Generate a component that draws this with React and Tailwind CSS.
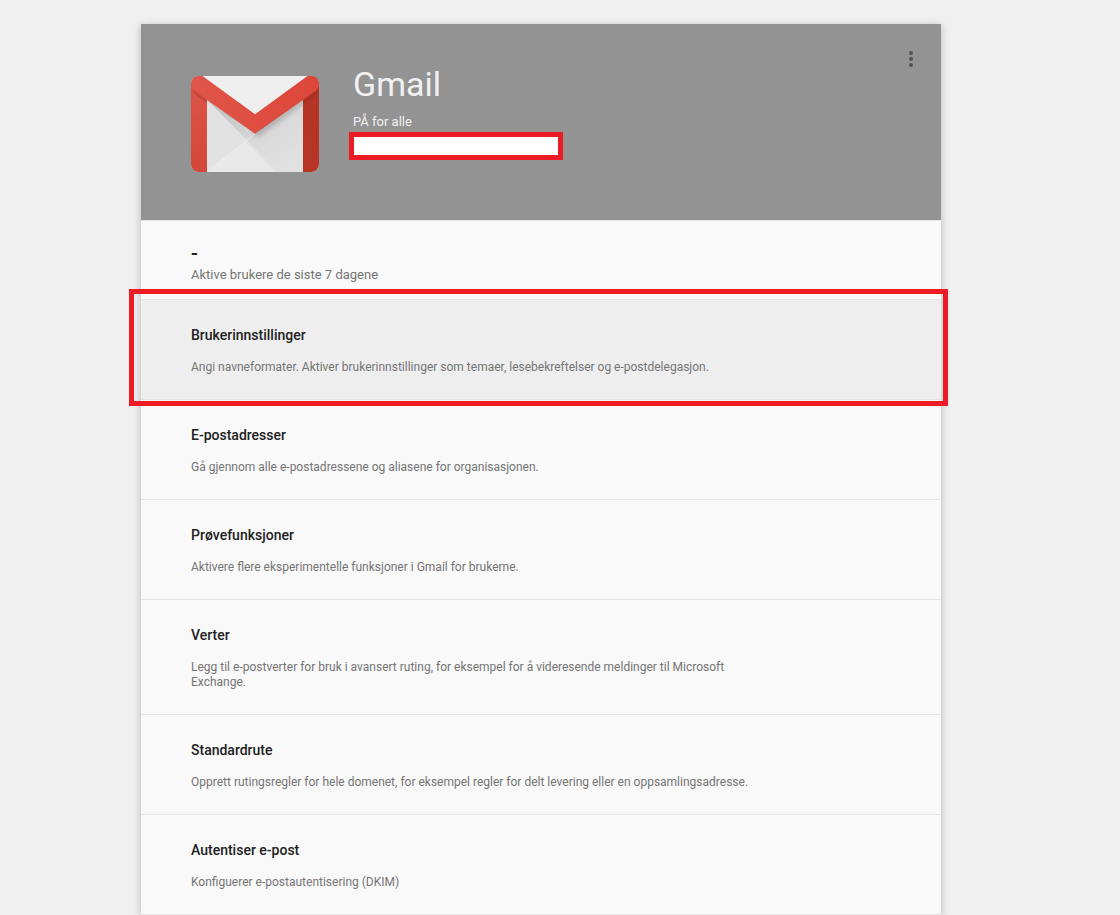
const settings = [
  {
    title: 'Brukerinnstillinger',
    text: 'Angi navneformater. Aktiver brukerinnstillinger som temaer, lesebekreftelser og e-postdelegasjon.',
    marked: true,
  },
  {
    title: 'E-postadresser',
    text: 'Gå gjennom alle e-postadressene og aliasene for organisasjonen.',
  },
  {
    title: 'Prøvefunksjoner',
    text: 'Aktivere flere eksperimentelle funksjoner i Gmail for brukerne.',
  },
  {
    title: 'Verter',
    text: 'Legg til e-postverter for bruk i avansert ruting, for eksempel for å videresende meldinger til Microsoft Exchange.',
  },
  {
    title: 'Standardrute',
    text: 'Opprett rutingsregler for hele domenet, for eksempel regler for delt levering eller en oppsamlingsadresse.',
  },
  {
    title: 'Autentiser e-post',
    text: 'Konfiguerer e-postautentisering (DKIM)',
  },
];

function GmailLogo() {
  return (
    <svg viewBox="0 0 128 96" className="h-24 w-32 shrink-0" aria-hidden="true">
      <defs>
        <clipPath id="envelope">
          <rect width="128" height="96" rx="8" />
        </clipPath>
        <clipPath id="paper">
          <rect x="16" width="96" height="96" />
        </clipPath>
        <linearGradient id="leftBar" x1="0" y1="0" x2="0" y2="1">
          <stop offset="0" stopColor="#dc5648" />
          <stop offset="1" stopColor="#d2473a" />
        </linearGradient>
        <linearGradient id="rightBar" x1="0" y1="0" x2="0" y2="1">
          <stop offset="0" stopColor="#b23324" />
          <stop offset="1" stopColor="#b83526" />
        </linearGradient>
        <linearGradient id="chevron" x1="0" y1="0" x2="1" y2="0">
          <stop offset="0" stopColor="#e0564a" />
          <stop offset="1" stopColor="#dc4638" />
        </linearGradient>
        <linearGradient id="foldShade" gradientUnits="userSpaceOnUse" x1="40" y1="34" x2="92" y2="96">
          <stop offset="0" stopColor="#c6c6c6" />
          <stop offset="0.5" stopColor="#d9d9d9" />
          <stop offset="1" stopColor="#e1e1e1" />
        </linearGradient>
        <filter id="soft" x="-20%" y="-20%" width="140%" height="140%">
          <feGaussianBlur stdDeviation="2.500" />
        </filter>
      </defs>
      <g clipPath="url(#envelope)">
        <rect width="128" height="96" fill="#e2e2e2" />
        <g clipPath="url(#paper)">
          <path d="M16 24L88 96H112V24Z" fill="url(#foldShade)" />
          <path d="M62 56L118 18V24L66 62Z" fill="#000" opacity="0.18" filter="url(#soft)" />
          <path d="M16 96L54 66L84 96Z" fill="#e9e9e9" />
          <path d="M16 95.500L64 58" stroke="#f0f0f0" strokeWidth="0.8" />
        </g>
        <rect width="16" height="96" fill="url(#leftBar)" />
        <rect x="112" width="16" height="96" fill="url(#rightBar)" />
        <path d="M0 13L16 25V27L5 19Z" fill="#9c3026" opacity="0.4" />
        <path d="M128 13L112 25V28L128 17Z" fill="#8f291d" opacity="0.3" />
        <path d="M10 0H118L64 39Z" fill="#efefef" />
        <path d="M0 8C0 3 3 0 8 0H11.500L64 38.300L116.500 0H120C125 0 128 3 128 8C128 11 127 13 124.500 15L64 57.500L3.500 15C1 13 0 11 0 8Z" fill="url(#chevron)" />
        <path d="M3.500 15L64 57.500L124.500 15" fill="none" stroke="#b8382c" strokeOpacity="0.5" strokeWidth="0.6" />
      </g>
    </svg>
  );
}

function Header() {
  return (
    <header className="flex h-[196px] items-start bg-[#939393] pl-[50px] pr-4 pt-5">
      <div className="pt-8">
        <GmailLogo />
      </div>
      <div className="ml-[34px] flex-1 pt-5 text-[#f1f1f1]">
        <h1 className="text-[34px] font-normal leading-10">Gmail</h1>
        <p className="mt-2 text-[13px] leading-5">PÅ for alle</p>
        <div className="-ml-1 h-7 w-[214px] border-[5px] border-[#ed1c24] bg-white" />
      </div>
      <button type="button" aria-label="Flere alternativer" className="flex h-[30px] w-7 items-center justify-center">
        <svg viewBox="0 0 4 16" className="h-4 w-1" fill="#535353" aria-hidden="true">
          <circle cx="2" cy="2" r="2" />
          <circle cx="2" cy="8" r="2" />
          <circle cx="2" cy="14" r="2" />
        </svg>
      </button>
    </header>
  );
}

function SettingRow({ title, text, marked }) {
  return (
    <li className={marked ? 'relative border-b border-[#e5e5e5] bg-[#eeeeee]' : 'border-b border-[#e5e5e5]'}>
      <a href="#" className="block px-[50px] pb-6 pt-[25px]">
        <h2 className="text-sm font-medium leading-5 text-[#212121]">{title}</h2>
        <p className="mt-[15px] max-w-[560px] text-xs leading-[15px] text-[#757575]">{text}</p>
      </a>
      {marked && (
        <div className="pointer-events-none absolute -bottom-[7px] -left-3 -right-[7px] -top-[11px] border-[5px] border-[#ed1c24]" />
      )}
    </li>
  );
}

export default function App() {
  return (
    <div className="flex min-h-screen flex-col bg-[#f0f0f0] pr-[38px] pt-6 font-[Roboto,sans-serif]">
      <main className="mx-auto w-full max-w-[800px] flex-1 bg-[#f9f9f9] shadow-[0_2px_8px_rgba(0,0,0,0.24)]">
        <Header />
        <section className="border-y border-[#e5e5e5] px-[50px] pb-3.5 pt-5">
          <p className="text-xl font-medium leading-6 text-[#212121]">-</p>
          <p className="text-[13px] leading-5 text-[#757575]">Aktive brukere de siste 7 dagene</p>
        </section>
        <ul>
          {settings.map((item) => (
            <SettingRow key={item.title} {...item} />
          ))}
        </ul>
      </main>
    </div>
  );
}
